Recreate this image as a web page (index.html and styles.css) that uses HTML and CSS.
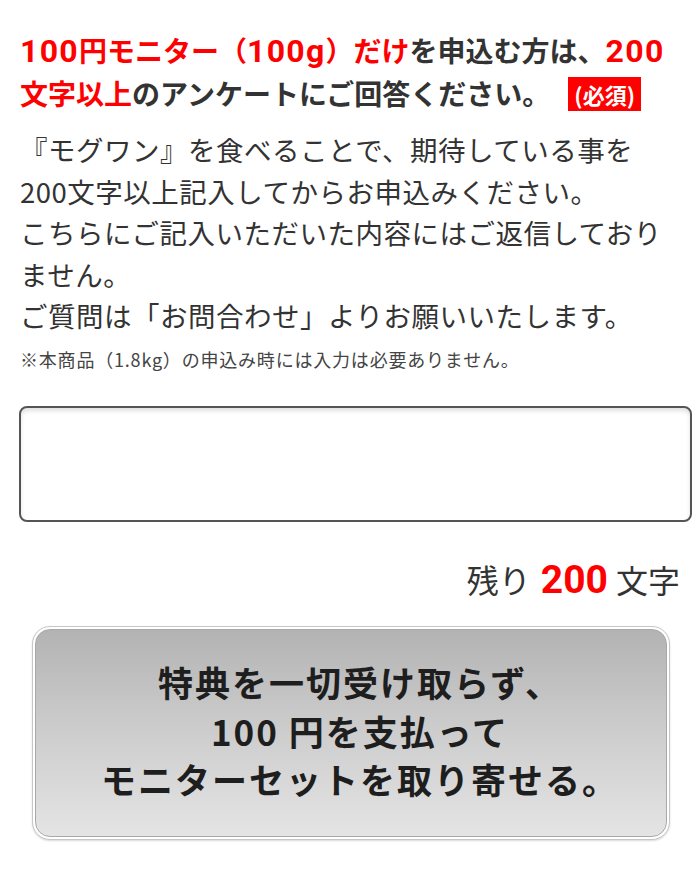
FILE: index.html
```html
<!DOCTYPE html>
<html lang="ja">
<head>
<meta charset="utf-8">
<link rel="stylesheet" href="styles.css">
</head>
<body>
<div class="page">
  <h2 class="heading">
    <span class="line"><span class="red"><span class="dg">100</span>円モニター（<span class="dg">100g</span>）だけ</span>を申込む方は、<span class="red dg">200</span></span>
    <span class="line"><span class="red">文字以上</span>のアンケートにご回答ください。<span class="badge">(必須)</span></span>
  </h2>
  <p class="desc">『モグワン』を食べることで、期待している事を<br>200文字以上記入してからお申込みください。<br>こちらにご記入いただいた内容にはご返信しており<br>ません。<br>ご質問は「お問合わせ」よりお願いいたします。</p>
  <p class="note">※本商品（1.8kg）の申込み時には入力は必要ありません。</p>
  <textarea class="answer"></textarea>
  <p class="count">残り<span class="num">200</span>文字</p>
  <div class="btn-wrap">
    <button class="btn" type="button"><span class="btn-inner">特典を一切受け取らず、<br>100 円を支払って<br>モニターセットを取り寄せる。</span></button>
  </div>
</div>
</body>
</html>
```
FILE: styles.css
```css
html, body {
  margin: 0;
  padding: 0;
  background: #fff;
}
body {
  font-family: "Noto Sans CJK JP", "Noto Sans", sans-serif;
  color: #333;
}
.page {
  padding: 29px 8px 40px 20px;
}
.heading {
  margin: 0;
  font-size: 28px;
  line-height: 42px;
  font-weight: 700;
  color: #333;
}
.heading .line {
  display: block;
  white-space: nowrap;
}
.heading .dg {
  font-family: Roboto, "Liberation Sans", sans-serif;
  font-size: 32px;
  letter-spacing: 1.3px;
}
.red {
  color: #f00;
}
.badge {
  display: inline-block;
  vertical-align: middle;
  background: #f00;
  color: #fff;
  font-size: 22px;
  line-height: 34px;
  padding: 0 6px;
  margin-left: 18px;
  position: relative;
  top: -3px;
}
.desc {
  margin: 15px 0 0;
  font-size: 27.5px;
  line-height: 41.5px;
  font-weight: 400;
  letter-spacing: 0.5px;
  color: #333;
  white-space: nowrap;
}
.note {
  margin: 9px 0 0;
  font-size: 18px;
  line-height: 27px;
  letter-spacing: 0.8px;
  color: #444;
}
.answer {
  display: block;
  box-sizing: border-box;
  width: 673px;
  height: 116px;
  margin: 33px 0 0 -1px;
  border: 2px solid #555;
  border-radius: 8px;
  box-shadow: inset 0 3px 4px rgba(0, 0, 0, 0.12);
  resize: none;
  background: #fff;
  font-family: inherit;
}
.count {
  margin: 36px 0 0;
  text-align: right;
  padding-right: 12px;
  font-size: 32px;
  line-height: 42px;
  color: #333;
}
.count .num {
  font-family: Roboto, "Liberation Sans", sans-serif;
  color: #f00;
  font-weight: 700;
  font-size: 39px;
  margin: 0 8px 0 10px;
}
.btn-wrap {
  margin-top: 25px;
  padding-left: 12px;
}
.btn {
  display: block;
  box-sizing: border-box;
  width: 638px;
  height: 214px;
  padding: 2px;
  margin: 0;
  border: 1px solid #c6c6c6;
  border-radius: 18px;
  background: #fff;
  box-shadow: 0 1px 2px rgba(0, 0, 0, 0.15);
  font-family: inherit;
  cursor: pointer;
}
.btn-inner {
  display: flex;
  align-items: center;
  justify-content: center;
  height: 100%;
  box-sizing: border-box;
  border: 1px solid #a8a8a8;
  border-radius: 15px;
  background: linear-gradient(to bottom, #b3b3b3 0%, #cbcbcb 45%, #e4e4e4 100%);
  color: #1e1e1e;
  font-size: 35px;
  line-height: 48.5px;
  font-weight: 700;
  letter-spacing: 2px;
  text-align: center;
  padding: 0 0 4px 18px;
}
```
